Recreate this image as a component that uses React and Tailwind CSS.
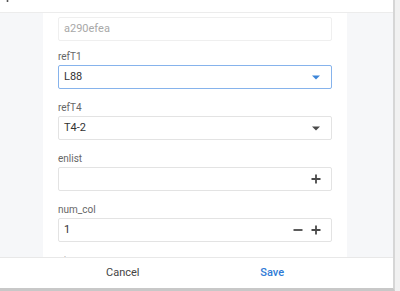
import React from "react";

const font = { fontFamily: "Roboto, 'Noto Sans', sans-serif" };

function Caret({ color }) {
  return (
    <svg width="8" height="5" viewBox="0 0 8 5" className="shrink-0">
      <path d="M0 0.5h8L4 4.5z" fill={color} />
    </svg>
  );
}

function Plus() {
  return (
    <svg width="10" height="10" viewBox="0 0 10 10" className="shrink-0">
      <path d="M5 0.5v9M0.5 5h9" stroke="#4a4a4a" strokeWidth="1.8" />
    </svg>
  );
}

function Minus() {
  return (
    <svg width="10" height="10" viewBox="0 0 10 10" className="shrink-0">
      <path d="M0.5 5h9" stroke="#4a4a4a" strokeWidth="1.8" />
    </svg>
  );
}

function Label({ children, first }) {
  return (
    <div
      className={
        (first ? "pt-[9px]" : "pt-[12px]") +
        " pb-[1px] text-[10px] leading-[14px] text-[#666]"
      }
    >
      {children}
    </div>
  );
}

export default function App() {
  return (
    <div className="w-[400px] h-[291px] overflow-hidden bg-[#f1f1f1]" style={font}>
      <div className="w-[395px] h-[291px] bg-white flex flex-col border-r-2 border-r-[#d6d6d6] border-b-[3px] border-b-[#c8c8c8]">
        <header className="h-[13px] shrink-0 border-b border-[#ececec] overflow-hidden pl-[6px]">
          {/* back arrow, mostly scrolled out of view */}
          <svg width="8" height="12" viewBox="0 0 8 12" className="mt-[-10px]">
            <path d="M1.5 0v12" stroke="#555" strokeWidth="1.6" />
          </svg>
        </header>

        <div className="flex-1 flex bg-[#f6f7f9] overflow-hidden">
          <div className="w-[43px] shrink-0" />
          <div className="w-[304px] shrink-0 bg-white px-[15px] pt-[4px]">
            <div className="h-[24px] border border-[#efefef] rounded-[2px] flex items-center px-[5px] text-[11px] text-[#a8a8a8]">
              a290efea
            </div>

            <Label first>refT1</Label>
            <div className="h-[24px] border border-[#86b3ec] rounded-[2px] flex items-center justify-between pl-[5px] pr-[11px] text-[11px] text-[#333]">
              <span>L88</span>
              <Caret color="#3d85d8" />
            </div>

            <Label>refT4</Label>
            <div className="h-[24px] border border-[#e3e3e3] rounded-[2px] flex items-center justify-between pl-[5px] pr-[11px] text-[11px] text-[#333]">
              <span>T4-2</span>
              <Caret color="#4a4a4a" />
            </div>

            <Label>enlist</Label>
            <div className="h-[24px] border border-[#e3e3e3] rounded-[2px] flex items-center justify-end pr-[10px]">
              <Plus />
            </div>

            <Label>num_col</Label>
            <div className="h-[24px] border border-[#e3e3e3] rounded-[2px] flex items-center justify-between pl-[5px] pr-[10px] text-[11px] text-[#333]">
              <span>1</span>
              <div className="flex items-center gap-[8px]">
                <Minus />
                <Plus />
              </div>
            </div>

            <Label>ut</Label>
          </div>
          <div className="flex-1" />
        </div>

        <footer className="h-[31px] shrink-0 border-t border-[#e8e8e8] flex items-center pl-[48px] pr-[46px] text-[11px]">
          <button className="flex-1 text-center text-[#444]">Cancel</button>
          <button className="flex-1 text-center text-[#2f7bd6] font-medium">Save</button>
        </footer>
      </div>
    </div>
  );
}
